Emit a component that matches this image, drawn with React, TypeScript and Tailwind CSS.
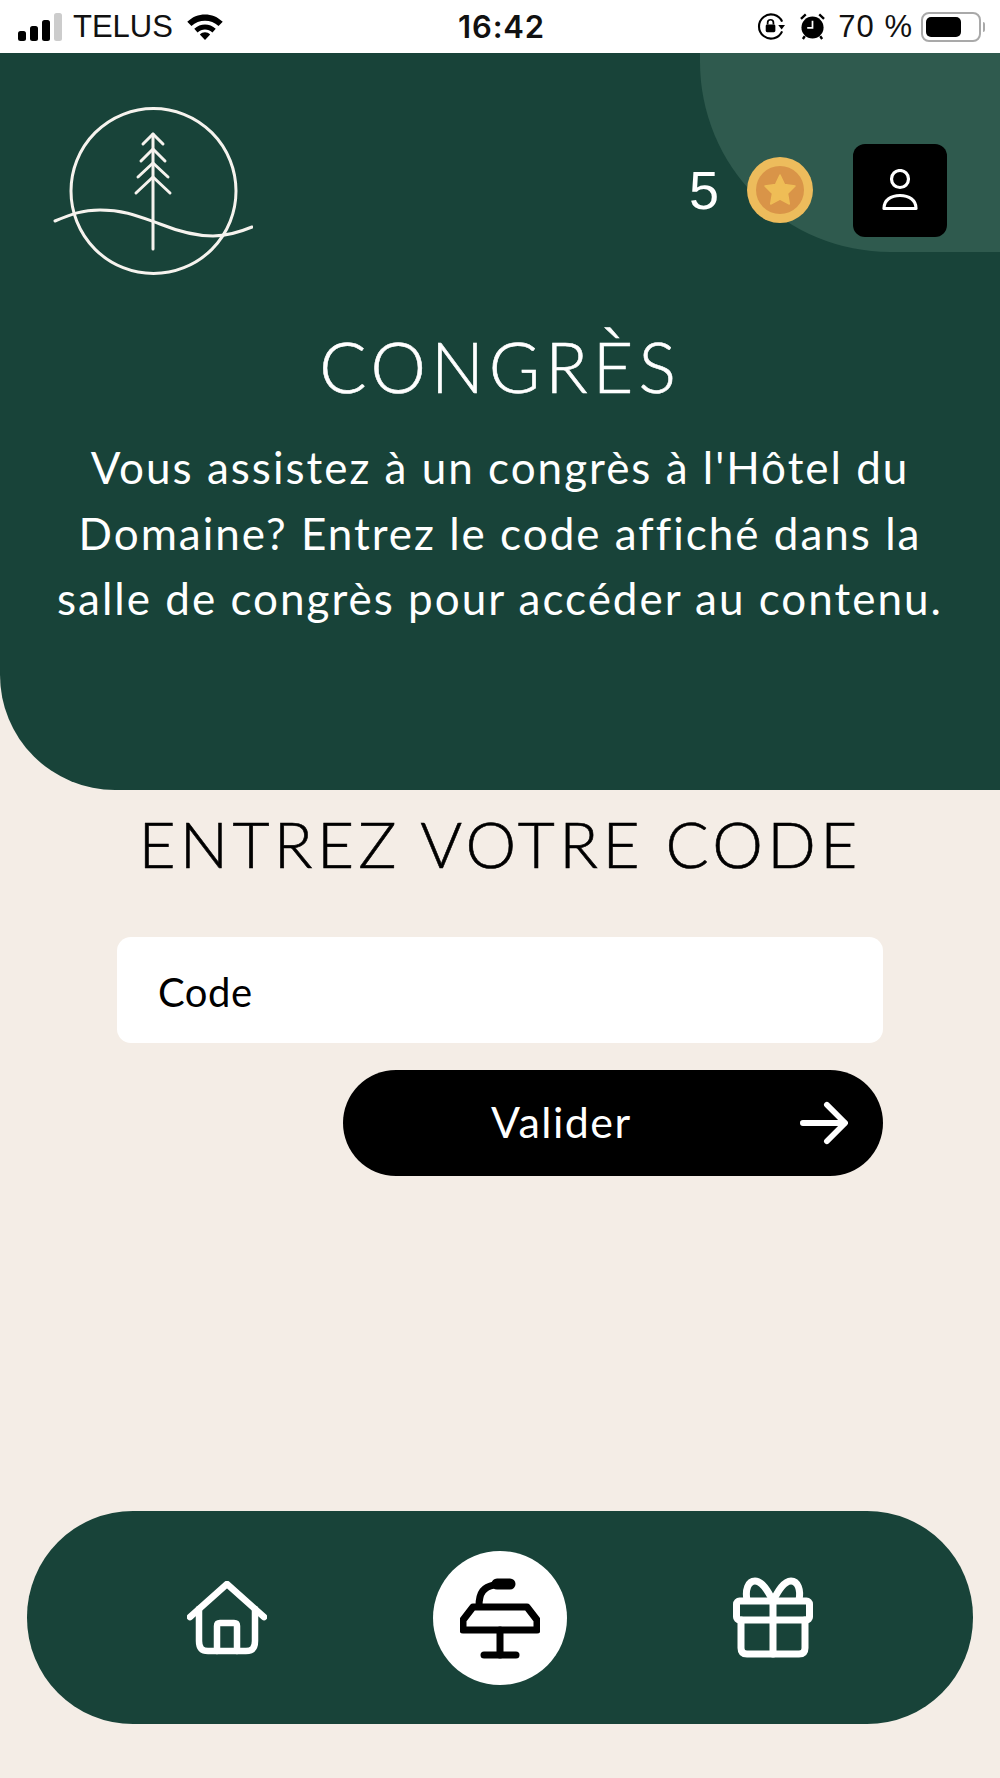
const Logo = () => (
  <svg viewBox="53 105 200 170" className="h-[170px] w-[200px]" fill="none" stroke="#f6f3ee" strokeWidth="3" strokeLinecap="round" strokeLinejoin="round">
    <circle cx="153.500" cy="190" r="82.500" />
    <path d="M55 220C72 213 82 209 100 209C125 209 140 216 160 223C180 231 195 235 213 235C228 235 240 231 252 226" />
    <path d="M153 133V248" />
    <path d="M143 143L153 133L163 143" />
    <path d="M141 160L153 148L165 160" />
    <path d="M138 176L153 162L168 176" />
    <path d="M136 192L153 176L170 192" />
  </svg>
);

const Coin = () => (
  <svg viewBox="0 0 66 66" className="h-[66px] w-[66px]">
    <circle cx="33" cy="33" r="33" fill="#edbc5c" />
    <circle cx="33" cy="33" r="24" fill="#d99448" />
    <path d="M33 18L37.500 27.500L48 29L40.500 36.500L42.300 47L33 42L23.700 47L25.500 36.500L18 29L28.500 27.500Z" fill="#efbd56" stroke="#efbd56" strokeWidth="1.500" strokeLinejoin="round" />
  </svg>
);

const UserIcon = () => (
  <svg viewBox="0 0 38 42" className="h-[42px] w-[38px]" fill="none" stroke="#fff" strokeWidth="3.200">
    <circle cx="19" cy="10" r="8.500" />
    <path d="M3 39.500H35C35 31 28 26.500 19 26.500S3 31 3 39.500Z" strokeLinejoin="round" />
  </svg>
);

const HomeIcon = () => (
  <svg viewBox="187 1581 80 74" className="h-[74px] w-[80px]" fill="none" stroke="#fff" strokeWidth="6.500" strokeLinecap="round" strokeLinejoin="round">
    <path d="M190 1617L227 1584L264 1617" />
    <path d="M199 1609V1641C199 1648 202 1651 208 1651H246C252 1651 255 1648 255 1641V1609" />
    <path d="M217 1651V1626C217 1624 218 1623 220 1623H234C236 1623 237 1624 237 1626V1651" />
  </svg>
);

const PodiumIcon = () => (
  <svg viewBox="460 1575 80 84" className="h-[84px] w-[80px]" fill="none" stroke="#000" strokeWidth="7" strokeLinecap="round" strokeLinejoin="round">
    <path d="M497 1583H510" strokeWidth="11" />
    <path d="M494 1584C484 1586 479 1591 479 1605" />
    <path d="M473 1606H527L537 1619V1629H463V1619Z" />
    <path d="M500 1629V1654" />
    <path d="M484 1654H516" />
  </svg>
);

const GiftIcon = () => (
  <svg viewBox="733 1577 80 81" className="h-[81px] w-[80px]" fill="none" stroke="#fff" strokeWidth="7" strokeLinecap="round" strokeLinejoin="round">
    <path d="M773 1601C768 1591 762 1581 755 1581C748 1581 745 1590 747 1600" />
    <path d="M773 1601C778 1591 784 1581 791 1581C798 1581 801 1590 799 1600" />
    <rect x="736.500" y="1601" width="73" height="19" rx="3" />
    <path d="M741 1620V1648C741 1652 743 1654 747 1654H799C803 1654 805 1652 805 1648V1620" />
    <path d="M773 1601V1654" />
  </svg>
);

const StatusBar = () => (
  <div className="flex h-[53px] items-center justify-between bg-white pl-[18px] pr-[15px] font-['Liberation_Sans',sans-serif] text-[#111]">
    <div className="flex flex-1 items-center">
      <svg viewBox="0 0 44 28" className="h-[28px] w-[44px]">
        <rect x="0" y="18" width="8" height="10" rx="2.500" fill="#000" />
        <rect x="12" y="13" width="8" height="15" rx="2.500" fill="#000" />
        <rect x="24" y="7" width="8" height="21" rx="2.500" fill="#000" />
        <rect x="36" y="0" width="8" height="28" rx="2.500" fill="#ccc" />
      </svg>
      <span className="ml-[11px] text-[31px] leading-none">TELUS</span>
      <svg viewBox="0 0 40 30" className="ml-[13px] h-[28px] w-[38px]">
        <path d="M20 29L14.500 23C17.500 20 22.500 20 25.500 23Z" fill="#000" />
        <path d="M8.500 17L12 20.800C16.500 16.500 23.500 16.500 28 20.800L31.500 17C25 10.800 15 10.800 8.500 17Z" fill="#000" />
        <path d="M1 9.500L5.500 14C13.500 6.500 26.500 6.500 34.500 14L39 9.500C28.500 -1 11.500 -1 1 9.500Z" fill="#000" />
      </svg>
    </div>
    <span className="font-['Inter',sans-serif] text-[31px] font-semibold leading-none tracking-[0.8px]">16:42</span>
    <div className="flex flex-1 items-center justify-end">
      <svg viewBox="0 0 30 28" className="h-[27px] w-[29px]" fill="none" stroke="#000" strokeWidth="2.200">
        <path d="M26 9A12.500 12.500 0 1 0 26 19" />
        <path d="M22 12.500H29L25.500 17Z" fill="#000" stroke="none" />
        <rect x="9" y="12" width="10" height="8" rx="1.500" fill="#000" stroke="none" />
        <path d="M11 12V10A3 3 0 0 1 17 10V12" strokeWidth="1.800" />
      </svg>
      <svg viewBox="0 0 26 28" className="ml-[14px] h-[27px] w-[25px]">
        <circle cx="13" cy="15" r="11.500" fill="#000" />
        <path d="M1 6L6 1.500M25 6L20 1.500M5 24L3 27M21 24L23 27" stroke="#000" strokeWidth="2.500" />
        <path d="M13 8V15.500H7.500" stroke="#fff" strokeWidth="1.800" fill="none" />
      </svg>
      <span className="ml-[13px] text-[31px] leading-none tracking-[1px]">70 %</span>
      <div className="ml-[8px] flex items-center">
        <div className="flex h-[30px] w-[60px] items-center rounded-[8px] border-2 border-[#a9a9a9] p-[3px]">
          <div className="h-full w-[35px] rounded-[5px] bg-black" />
        </div>
        <div className="ml-[2px] h-[10px] w-[2px] rounded-r-full bg-[#a9a9a9]" />
      </div>
    </div>
  </div>
);

const Header = () => (
  <div className="relative h-[737px] overflow-hidden rounded-bl-[115px] bg-[#184339] text-white">
    <div className="absolute right-0 top-0 h-[199px] w-[300px] rounded-bl-[190px] bg-[#2f5a4e]" />
    <div className="relative flex items-center justify-between pl-[53px] pr-[53px] pt-[53px]">
      <Logo />
      <div className="-mt-[2px] flex items-center">
        <span className="font-['Liberation_Sans',sans-serif] text-[54px] leading-none">5</span>
        <div className="ml-[28px]">
          <Coin />
        </div>
        <div className="ml-[40px] flex h-[93px] w-[94px] items-center justify-center rounded-[12px] bg-black">
          <UserIcon />
        </div>
      </div>
    </div>
    <h1 className="relative mt-[45px] text-center font-['Lato',sans-serif] text-[70px] font-light leading-[90px] tracking-[5px] [-webkit-text-stroke:0.6px_#fff]">CONGRÈS</h1>
    <p className="relative mt-[24px] text-center font-['Lato',sans-serif] text-[44px] leading-[65.500px] tracking-[2px]">
      Vous assistez à un congrès à l'Hôtel du
      <br />
      Domaine? Entrez le code affiché dans la
      <br />
      salle de congrès pour accéder au contenu.
    </p>
  </div>
);

export default function App() {
  return (
    <div className="flex h-[1778px] w-full flex-col bg-[#f4ede6]">
      <StatusBar />
      <Header />
      <h2 className="mt-[14px] text-center font-['Lato',sans-serif] text-[64px] font-light leading-[80px] tracking-[4.300px] text-black [-webkit-text-stroke:0.6px_#000]">
        ENTREZ VOTRE CODE
      </h2>
      <div className="mt-[53px] flex flex-col items-end gap-[27px] px-[117px]">
        <input
          placeholder="Code"
          className="h-[106px] w-full rounded-[14px] bg-white px-[41px] pt-[3px] font-['Lato',sans-serif] text-[40px] tracking-[0.5px] text-black outline-none placeholder:text-black"
        />
        <button
          type="button"
          className="flex h-[106px] w-[540px] items-center justify-between rounded-full bg-black pl-[148px] pr-[35px] font-['Lato',sans-serif] text-[43px] tracking-[1.500px] text-white"
        >
          <span className="-mt-[2px]">Valider</span>
          <svg viewBox="0 0 50 44" className="h-[44px] w-[48px]" fill="none" stroke="#fff" strokeWidth="6" strokeLinecap="round" strokeLinejoin="round">
            <path d="M3 22H46" />
            <path d="M28 3L47 22L28 41" />
          </svg>
        </button>
      </div>
      <nav className="mx-[27px] mt-[335px] flex h-[213px] items-center rounded-[106px] bg-[#184339]">
        <div className="ml-[160px]">
          <HomeIcon />
        </div>
        <div className="ml-[166px] flex h-[134px] w-[134px] items-center justify-center rounded-full bg-white">
          <PodiumIcon />
        </div>
        <div className="ml-[166px]">
          <GiftIcon />
        </div>
      </nav>
    </div>
  );
}
